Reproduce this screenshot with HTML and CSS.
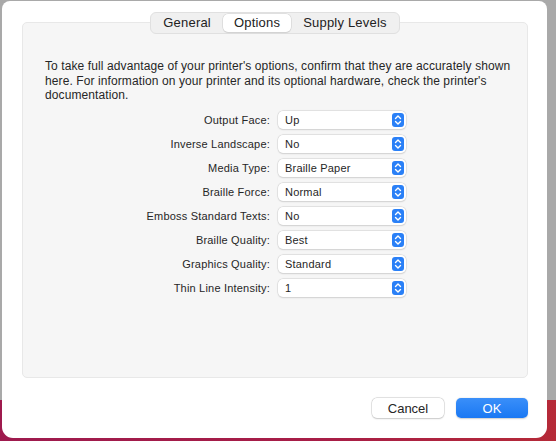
FILE: index.html
```html
<!DOCTYPE html>
<html lang="en">
<head>
  <meta charset="UTF-8" />
  <title>Printer Options</title>
  <link rel="stylesheet" href="styles.css">
</head>
<body>
  <div class="sheet">
    <div class="tabs">
      <div class="tab">General</div>
      <div class="tab selected">Options</div>
      <div class="tab">Supply Levels</div>
    </div>

    <div class="group">
      <p class="intro">
        To take full advantage of your printer's options, confirm that they are accurately shown<br>
        here. For information on your printer and its optional hardware, check the printer's<br>
        documentation.
      </p>

      <div class="options">
        <label>Output Face:</label>
        <div class="popup"><span>Up</span><svg class="stepper" viewBox="0 0 12 14"><path d="M3.5 5.5L6 3l2.5 2.5M3.5 8.5L6 11l2.5-2.5" /></svg></div>

        <label>Inverse Landscape:</label>
        <div class="popup"><span>No</span><svg class="stepper" viewBox="0 0 12 14"><path d="M3.5 5.5L6 3l2.5 2.5M3.5 8.5L6 11l2.5-2.5" /></svg></div>

        <label>Media Type:</label>
        <div class="popup"><span>Braille Paper</span><svg class="stepper" viewBox="0 0 12 14"><path d="M3.5 5.5L6 3l2.5 2.5M3.5 8.5L6 11l2.5-2.5" /></svg></div>

        <label>Braille Force:</label>
        <div class="popup"><span>Normal</span><svg class="stepper" viewBox="0 0 12 14"><path d="M3.5 5.5L6 3l2.5 2.5M3.5 8.5L6 11l2.5-2.5" /></svg></div>

        <label>Emboss Standard Texts:</label>
        <div class="popup"><span>No</span><svg class="stepper" viewBox="0 0 12 14"><path d="M3.5 5.5L6 3l2.5 2.5M3.5 8.5L6 11l2.5-2.5" /></svg></div>

        <label>Braille Quality:</label>
        <div class="popup"><span>Best</span><svg class="stepper" viewBox="0 0 12 14"><path d="M3.5 5.5L6 3l2.5 2.5M3.5 8.5L6 11l2.5-2.5" /></svg></div>

        <label>Graphics Quality:</label>
        <div class="popup"><span>Standard</span><svg class="stepper" viewBox="0 0 12 14"><path d="M3.5 5.5L6 3l2.5 2.5M3.5 8.5L6 11l2.5-2.5" /></svg></div>

        <label>Thin Line Intensity:</label>
        <div class="popup"><span>1</span><svg class="stepper" viewBox="0 0 12 14"><path d="M3.5 5.5L6 3l2.5 2.5M3.5 8.5L6 11l2.5-2.5" /></svg></div>
      </div>
    </div>

    <div class="actions">
      <button class="btn">Cancel</button>
      <button class="btn primary">OK</button>
    </div>
  </div>
</body>
</html>
```

FILE: styles.css
```css
* {
  margin: 0;
  padding: 0;
  box-sizing: border-box;
}

body {
  width: 556px;
  height: 441px;
  overflow: hidden;
  font-family: "Liberation Sans", Arial, sans-serif;
  color: #262626;
  background:
    linear-gradient(to right, #9e1a4e 0%, #a81e46 60%, #b52a38 100%) bottom / 100% 41px no-repeat,
    #a9a9a9;
}

.sheet {
  width: 545px;
  height: 437px;
  margin: 1px 0 0 2px;
  background: #ffffff;
  border-radius: 8px 8px 11px 11px;
  padding: 11px 19px 0 20px;
  display: flex;
  flex-direction: column;
}

/* segmented tab control */
.tabs {
  align-self: center;
  display: flex;
  align-items: center;
  height: 22px;
  margin: 0 0 -12px 0;
  padding: 1px;
  background: #f0f0f0;
  border: 1px solid #e0e0e0;
  border-radius: 6px;
  position: relative;
  z-index: 1;
}

.tab {
  font-size: 13px;
  letter-spacing: 0.2px;
  line-height: 18px;
  padding: 0 11px 0 11px;
  color: #222;
}

.tab.selected {
  background: #ffffff;
  border-radius: 5px;
  box-shadow: 0 0 0 0.5px #cfcfcf, 0 1px 1px rgba(0, 0, 0, 0.12);
  padding: 0 11px 0 11px;
  margin: 0 1px;
}

.group {
  height: 356px;
  background: #f6f6f6;
  border: 1px solid #e8e8e8;
  border-radius: 5px;
  padding: 36px 20px 0 22px;
}

.intro {
  font-size: 12px;
  letter-spacing: 0.1px;
  line-height: 14.5px;
  margin-bottom: 5px;
  white-space: nowrap;
}

.options {
  display: grid;
  grid-template-columns: 225px 128px;
  column-gap: 8px;
  grid-auto-rows: 24px;
  align-items: center;
}

.options label {
  font-size: 11px;
  letter-spacing: 0.2px;
  text-align: right;
  white-space: nowrap;
}

.popup {
  height: 18px;
  background: #ffffff;
  border-radius: 5px;
  box-shadow: 0 0 0 0.5px #d4d4d4, 0 0.5px 1.5px rgba(0, 0, 0, 0.15);
  display: flex;
  align-items: center;
  justify-content: space-between;
  padding: 0 2px 0 7px;
  font-size: 11px;
  letter-spacing: 0.2px;
}

.stepper {
  width: 12px;
  height: 14px;
  background: #2a80f7;
  border-radius: 3px;
  fill: none;
  stroke: #ffffff;
  stroke-width: 1.4;
  stroke-linecap: round;
  stroke-linejoin: round;
}

.actions {
  display: flex;
  justify-content: flex-end;
  gap: 12px;
  margin-top: 20px;
}

.btn {
  width: 72px;
  height: 20px;
  font-family: "Liberation Sans", Arial, sans-serif;
  font-size: 13px;
  color: #262626;
  background: #ffffff;
  border: none;
  border-radius: 5px;
  box-shadow: 0 0 0 0.5px #cccccc, 0 0.5px 1.5px rgba(0, 0, 0, 0.2);
}

.btn.primary {
  color: #ffffff;
  background: linear-gradient(to bottom, #3a8ff9, #1a78f3);
  box-shadow: 0 0.5px 1.5px rgba(0, 0, 0, 0.2);
}
```
